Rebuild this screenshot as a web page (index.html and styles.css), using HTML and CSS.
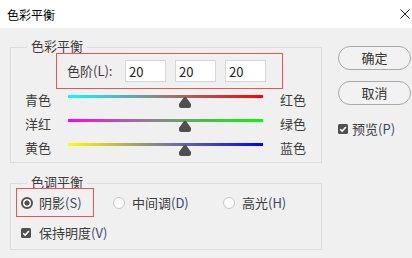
FILE: index.html
```html
<!DOCTYPE html>
<html lang="zh-CN">
<head>
<meta charset="utf-8">
<title>色彩平衡</title>
<link rel="stylesheet" href="styles.css">
</head>
<body>
<div class="dialog">
  <div class="titlebar">
    <span class="title">色彩平衡</span>
    <svg class="close" viewBox="0 0 10 10" width="10" height="10"><path d="M0.5 0.5 L9.5 9.5 M9.5 0.5 L0.5 9.5" stroke="#222" stroke-width="1" fill="none"/></svg>
  </div>
  <div class="body">
    <div class="main">
      <fieldset class="group group-color">
        <legend>色彩平衡</legend>
        <div class="levels">
          <span class="levels-label">色阶(L):</span>
          <input class="num" type="text" value="20">
          <input class="num" type="text" value="20">
          <input class="num" type="text" value="20">
        </div>
        <div class="slider-row">
          <span class="lab">青色</span>
          <div class="track"><div class="bar bar-cr"></div><svg class="thumb" style="left:60%" viewBox="0 0 12 11" width="12" height="11"><path d="M5 0 L7 0 L12 7 L12 9 Q12 11 10 11 L2 11 Q0 11 0 9 L0 7 Z" fill="#4f4f4f"/></svg></div>
          <span class="lab lab-right">红色</span>
        </div>
        <div class="slider-row">
          <span class="lab">洋红</span>
          <div class="track"><div class="bar bar-mg"></div><svg class="thumb" style="left:60%" viewBox="0 0 12 11" width="12" height="11"><path d="M5 0 L7 0 L12 7 L12 9 Q12 11 10 11 L2 11 Q0 11 0 9 L0 7 Z" fill="#4f4f4f"/></svg></div>
          <span class="lab lab-right">绿色</span>
        </div>
        <div class="slider-row">
          <span class="lab">黄色</span>
          <div class="track"><div class="bar bar-yb"></div><svg class="thumb" style="left:60%" viewBox="0 0 12 11" width="12" height="11"><path d="M5 0 L7 0 L12 7 L12 9 Q12 11 10 11 L2 11 Q0 11 0 9 L0 7 Z" fill="#4f4f4f"/></svg></div>
          <span class="lab lab-right">蓝色</span>
        </div>
      </fieldset>
      <fieldset class="group group-tone">
        <legend>色调平衡</legend>
        <div class="radios">
          <label class="radio marked"><span class="dot on"></span>阴影<span class="key">(S)</span></label>
          <label class="radio mid"><span class="dot"></span>中间调<span class="key">(D)</span></label>
          <label class="radio"><span class="dot"></span>高光<span class="key">(H)</span></label>
        </div>
        <label class="check keep"><svg class="box" viewBox="0 0 10 10" width="10" height="10"><rect x="0" y="0" width="10" height="10" rx="1.5" fill="#505050"/><path d="M2.2 5.2 L4.2 7.2 L7.9 3" stroke="#fff" stroke-width="1.6" fill="none"/></svg>保持明度<span class="key">(V)</span></label>
      </fieldset>
    </div>
    <div class="side">
      <button class="btn" type="button">确定</button>
      <button class="btn btn-second" type="button">取消</button>
      <label class="check preview"><svg class="box" viewBox="0 0 10 10" width="10" height="10"><rect x="0" y="0" width="10" height="10" rx="1.5" fill="#505050"/><path d="M2.2 5.2 L4.2 7.2 L7.9 3" stroke="#fff" stroke-width="1.6" fill="none"/></svg>预览<span class="key">(P)</span></label>
    </div>
  </div>
</div>
</body>
</html>
```
FILE: styles.css
```css
* { box-sizing: border-box; }
html, body { margin: 0; padding: 0; }
body {
  width: 412px;
  height: 258px;
  overflow: hidden;
  background: #f0f0f0;
  font-family: "Noto Sans CJK SC", "Noto Sans", sans-serif;
  color: #3c3c3c;
  font-size: 13px;
}
.titlebar {
  height: 28px;
  background: #fff;
  display: flex;
  align-items: center;
  justify-content: space-between;
  padding: 0 2px 0 7px;
}
.title { font-size: 12px; color: #000; }
.close { display: block; }
.body {
  display: flex;
  align-items: flex-start;
  padding: 14px 0 0 10px;
  gap: 16px;
}
.main { width: 312px; display: flex; flex-direction: column; }
.group {
  margin: 0;
  border: 1px solid #dcdcdc;
  min-width: 0;
}
.group legend {
  font-size: 13px;
  line-height: 8px;
  padding: 0 4px 2px;
  color: #3c3c3c;
}
.group-color { padding: 0 0 1px 14px; }
.group-color legend { margin-left: 2px; }
.levels {
  margin: 1px 0 0 31px;
  width: 227px;
  height: 36px;
  border: 1px solid #f05252;
  display: flex;
  align-items: center;
  padding: 0 0 0 10px;
}
.levels-label { width: 58px; line-height: 16px; }
.num {
  width: 41px;
  height: 22px;
  margin: 0 9px 0 0;
  border: 1px solid #d6d6d6;
  background: #fff;
  padding: 0 0 0 3px;
  font-family: inherit;
  font-size: 13px;
  color: #222;
  outline: none;
}
.slider-row {
  display: flex;
  align-items: flex-start;
  height: 24px;
}
.lab { width: 43px; line-height: 16px; margin-top: 3px; }
.lab-right { width: auto; margin-left: 17px; }
.track {
  position: relative;
  width: 195px;
  height: 13px;
  margin-top: 6px;
}
.bar { height: 3px; }
.bar-cr { background: linear-gradient(to right, #00ffff, #888888 45%, #ff0000); }
.bar-mg { background: linear-gradient(to right, #ff00ff, #888888 45%, #00ff00); }
.bar-yb { background: linear-gradient(to right, #ffff00, #888888 45%, #0000ff); }
.thumb {
  position: absolute;
  top: 2px;
  margin-left: -6px;
  display: block;
}
.group-tone { margin-top: 15px; padding: 0 0 7px 5px; }
.group-tone legend { margin-left: 11px; }
.radios { display: flex; height: 29px; }
.radio {
  display: flex;
  align-items: center;
  line-height: 16px;
}
.radio.marked {
  width: 78px;
  height: 29px;
  border: 1px solid #f05252;
  padding-left: 4px;
}
.radio.mid { width: 110px; margin-left: 19px; }
.dot {
  width: 12px;
  height: 12px;
  border-radius: 50%;
  border: 1px solid #c6c6c6;
  background: #fcfcfc;
  margin-right: 7px;
  flex: none;
}
.radio.marked .dot { margin-right: 6px; }
.dot.on {
  border: 2px solid #505050;
  background: radial-gradient(circle at center, #505050 0 2.3px, #fff 2.9px);
}
.key { color: #3b4768; }
.check {
  display: flex;
  align-items: center;
  line-height: 18px;
}
.box { display: block; flex: none; }
.keep { margin: 7px 0 0 5px; }
.keep .box { margin-right: 8px; }
.side { width: 73px; margin-top: 4px; display: flex; flex-direction: column; }
.btn {
  display: block;
  width: 73px;
  height: 24px;
  border: 1px solid #a9a9a9;
  border-radius: 12px;
  background: #f2f2f2;
  font-family: inherit;
  font-size: 13px;
  color: #333;
  padding: 0;
  line-height: 22px;
}
.btn-second { margin-top: 11px; }
.preview { margin-top: 15px; }
.preview .box { margin-right: 4px; }
```
